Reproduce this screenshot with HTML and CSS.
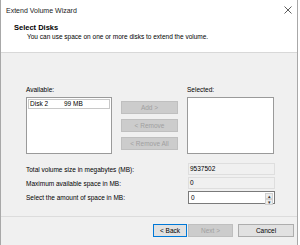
FILE: index.html
```html
<!DOCTYPE html>
<html lang="en">
  <head>
    <meta charset="UTF-8" />
    <title>Extend Volume Wizard</title>
    <link rel="stylesheet" href="styles.css">
  </head>
  <body>
    <div class="window">
      <!-- Naglowek kreatora -->
      <div class="header">
        <div class="titlebar">
          <span class="title">Extend Volume Wizard</span>
          <span class="close">
            <svg width="8" height="8" viewBox="0 0 8 8">
              <path d="M0.5 0.5 L7.5 7.5 M7.5 0.5 L0.5 7.5" stroke="#333" stroke-width="0.8" fill="none" />
            </svg>
          </span>
        </div>
        <div class="heading">Select Disks</div>
        <div class="subtitle">You can use space on one or more disks to extend the volume.</div>
      </div>

      <!-- Wybor dyskow -->
      <div class="content">
        <div class="pickers">
          <div class="column">
            <div class="label">Available:</div>
            <div class="listbox">
              <div class="item"><span class="disk">Disk 2</span><span>99 MB</span></div>
            </div>
          </div>
          <div class="actions">
            <button class="btn disabled">Add &gt;</button>
            <button class="btn disabled">&lt; Remove</button>
            <button class="btn disabled">&lt; Remove All</button>
          </div>
          <div class="column">
            <div class="label">Selected:</div>
            <div class="listbox"></div>
          </div>
        </div>

        <div class="fields">
          <div class="field-row">
            <span class="field-label">Total volume size in megabytes (MB):</span>
            <span class="readonly">9537502</span>
          </div>
          <div class="field-row">
            <span class="field-label">Maximum available space in MB:</span>
            <span class="readonly">0</span>
          </div>
          <div class="field-row">
            <span class="field-label">Select the amount of space in MB:</span>
            <span class="spinner">
              <span class="spin-value">0</span>
              <span class="spin-buttons">
                <span class="spin-up">&#9652;</span>
                <span class="spin-down">&#9662;</span>
              </span>
            </span>
          </div>
        </div>
      </div>

      <!-- Przyciski na dole -->
      <div class="footer">
        <button class="btn default back">&lt; Back</button>
        <button class="btn disabled next">Next &gt;</button>
        <button class="btn cancel">Cancel</button>
      </div>
    </div>
  </body>
</html>
```

FILE: styles.css
```css
body {
  margin: 0;
  background: #fff;
  font-family: "Liberation Sans", Arial, sans-serif;
  font-size: 6.5px;
  color: #000;
}

.window {
  width: 296px;
  height: 245px;
  border-left: 1px solid #a8a8a8;
  border-right: 1px solid #a8a8a8;
  display: flex;
  flex-direction: column;
  background: #f0f0f0;
}

.header {
  background: #fff;
  height: 52px;
  border-bottom: 1px solid #d8d8d8;
}

.titlebar {
  height: 20px;
  display: flex;
  align-items: center;
  justify-content: space-between;
  padding: 0 5px 0 5px;
}

.title {
  font-size: 7px;
  color: #222;
}

.close {
  display: flex;
  margin-top: -1px;
}

.heading {
  font-weight: bold;
  font-size: 7.5px;
  padding-left: 13px;
  margin-top: 3px;
  line-height: 9px;
}

.subtitle {
  padding-left: 26px;
  margin-top: 0;
  line-height: 9px;
}

.content {
  height: 164px;
  padding: 33px 0 0 25px;
  box-sizing: border-box;
  border-bottom: 1px solid #dcdcdc;
}

.pickers {
  display: flex;
  gap: 9px;
}

.column {
  display: flex;
  flex-direction: column;
}

.label {
  line-height: 8px;
  margin-bottom: 3px;
}

.listbox {
  width: 86px;
  height: 57px;
  box-sizing: border-box;
  background: #fff;
  border: 1px solid #9a9a9a;
  padding: 1px;
}

.pickers .column:last-child .listbox {
  width: 87px;
}

.item {
  display: flex;
  height: 8px;
  line-height: 8px;
  border: 1px solid #c8c8c8;
  padding-left: 1px;
}

.disk {
  width: 34px;
}

.actions {
  display: flex;
  flex-direction: column;
  gap: 5px;
  padding-top: 15px;
}

.btn {
  font-family: inherit;
  font-size: 6.5px;
  margin: 0;
  padding: 0;
  width: 57px;
  height: 13px;
  border: 1px solid #adadad;
  background: #e1e1e1;
  color: #000;
}

.btn.disabled {
  background: #cccccc;
  border-color: #bfbfbf;
  color: #a0a0a0;
}

.fields {
  margin-top: 9px;
  display: flex;
  flex-direction: column;
  gap: 2px;
  width: 249px;
}

.field-row {
  display: flex;
  justify-content: space-between;
  align-items: center;
}

.readonly {
  width: 87px;
  height: 12px;
  box-sizing: border-box;
  border: 1px solid #dedede;
  padding-left: 1px;
  line-height: 10px;
}

.spinner {
  width: 87px;
  height: 13px;
  box-sizing: border-box;
  border: 1px solid #7a7a7a;
  background: #fff;
  display: flex;
  justify-content: space-between;
}

.spin-value {
  padding-left: 2px;
  line-height: 11px;
}

.spin-buttons {
  width: 8px;
  display: flex;
  flex-direction: column;
  margin: 1px 1px 1px 0;
}

.spin-up,
.spin-down {
  flex: 1;
  background: #ececec;
  border: 1px solid #d0d0d0;
  font-size: 5px;
  line-height: 4px;
  text-align: center;
  color: #333;
}

.footer {
  flex: 1;
  display: flex;
  padding: 7px 3px 0 0;
  justify-content: flex-end;
  align-items: flex-start;
}

.footer .back {
  width: 34px;
}

.footer .next {
  width: 45px;
  margin-left: 1px;
}

.btn.default {
  border-color: #0078d7;
  background: #e1e1e1;
}

.footer .cancel {
  width: 56px;
  margin-left: 5px;
}
```
